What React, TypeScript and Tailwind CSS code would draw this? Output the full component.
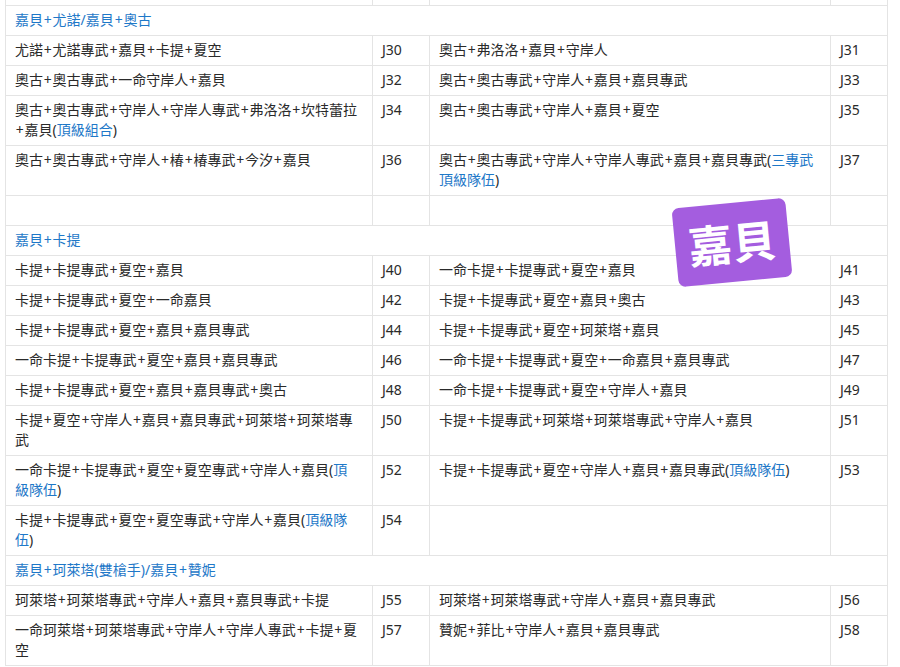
import React from "react";

const Blue = ({ children }: { children: React.ReactNode }) => (
  <span className="text-[#1e78c8]">{children}</span>
);

function T({ text }: { text: string }) {
  const parts = text.split("+");
  const out: React.ReactNode[] = [];
  parts.forEach((p, i) => {
    if (i > 0)
      out.push(
        <span key={"p" + i} className="px-[0.8px]">
          +
        </span>
      );
    if (p) out.push(<React.Fragment key={"t" + i}>{p}</React.Fragment>);
  });
  return <>{out}</>;
}

const td =
  "border border-[#e4e4e4] pt-[4px] pb-[5px] px-[9px] leading-[20px] align-top whitespace-nowrap text-[14px] text-[#2a2a2a]";

function Row({
  a,
  ac,
  b,
  bc,
}: {
  a: React.ReactNode;
  ac: string;
  b: React.ReactNode;
  bc: string;
}) {
  return (
    <tr>
      <td className={td}>{a}</td>
      <td className={td}>{ac}</td>
      <td className={td}>{b}</td>
      <td className={td}>{bc}</td>
    </tr>
  );
}

function Header({ text }: { text: string }) {
  return (
    <tr>
      <td colSpan={4} className={td}>
        <span className="text-[#1e78c8]">
          <T text={text} />
        </span>
      </td>
    </tr>
  );
}

export default function App() {
  return (
    <div
      className="relative min-h-screen bg-white pl-[5px] overflow-hidden"
      style={{ fontFamily: '"Noto Sans", "Noto Sans CJK TC", sans-serif' }}
    >
      <table className="border-collapse table-fixed w-[882px]">
        <colgroup>
          <col className="w-[367px]" />
          <col className="w-[57px]" />
          <col className="w-[401px]" />
          <col className="w-[57px]" />
        </colgroup>
        <tbody>
          <tr className="h-[5px]">
            <td className="border-x border-b border-[#e4e4e4] p-0 h-[5px]"></td>
            <td className="border-x border-b border-[#e4e4e4] p-0 h-[5px]"></td>
            <td className="border-x border-b border-[#e4e4e4] p-0 h-[5px]"></td>
            <td className="border-x border-b border-[#e4e4e4] p-0 h-[5px]"></td>
          </tr>
          <Header text="嘉貝+尤諾/嘉貝+奧古" />
          <Row
            a={<T text="尤諾+尤諾專武+嘉貝+卡提+夏空" />}
            ac="J30"
            b={<T text="奧古+弗洛洛+嘉貝+守岸人" />}
            bc="J31"
          />
          <Row
            a={<T text="奧古+奧古專武+一命守岸人+嘉貝" />}
            ac="J32"
            b={<T text="奧古+奧古專武+守岸人+嘉貝+嘉貝專武" />}
            bc="J33"
          />
          <Row
            a={
              <>
                <T text="奧古+奧古專武+守岸人+守岸人專武+弗洛洛+坎特蕾拉" />
                <br />
                <T text="+嘉貝" />(<Blue>頂級組合</Blue>)
              </>
            }
            ac="J34"
            b={<T text="奧古+奧古專武+守岸人+嘉貝+夏空" />}
            bc="J35"
          />
          <Row
            a={<T text="奧古+奧古專武+守岸人+椿+椿專武+今汐+嘉貝" />}
            ac="J36"
            b={
              <>
                <T text="奧古+奧古專武+守岸人+守岸人專武+嘉貝+嘉貝專武" />(
                <Blue>三專武</Blue>
                <br />
                <Blue>頂級隊伍</Blue>)
              </>
            }
            bc="J37"
          />
          <Row a={"\u00a0"} ac="" b="" bc="" />
          <Header text="嘉貝+卡提" />
          <Row
            a={<T text="卡提+卡提專武+夏空+嘉貝" />}
            ac="J40"
            b={<T text="一命卡提+卡提專武+夏空+嘉貝" />}
            bc="J41"
          />
          <Row
            a={<T text="卡提+卡提專武+夏空+一命嘉貝" />}
            ac="J42"
            b={<T text="卡提+卡提專武+夏空+嘉貝+奧古" />}
            bc="J43"
          />
          <Row
            a={<T text="卡提+卡提專武+夏空+嘉貝+嘉貝專武" />}
            ac="J44"
            b={<T text="卡提+卡提專武+夏空+珂萊塔+嘉貝" />}
            bc="J45"
          />
          <Row
            a={<T text="一命卡提+卡提專武+夏空+嘉貝+嘉貝專武" />}
            ac="J46"
            b={<T text="一命卡提+卡提專武+夏空+一命嘉貝+嘉貝專武" />}
            bc="J47"
          />
          <Row
            a={<T text="卡提+卡提專武+夏空+嘉貝+嘉貝專武+奧古" />}
            ac="J48"
            b={<T text="一命卡提+卡提專武+夏空+守岸人+嘉貝" />}
            bc="J49"
          />
          <Row
            a={
              <>
                <T text="卡提+夏空+守岸人+嘉貝+嘉貝專武+珂萊塔+珂萊塔專" />
                <br />武
              </>
            }
            ac="J50"
            b={<T text="卡提+卡提專武+珂萊塔+珂萊塔專武+守岸人+嘉貝" />}
            bc="J51"
          />
          <Row
            a={
              <>
                <T text="一命卡提+卡提專武+夏空+夏空專武+守岸人+嘉貝" />(
                <Blue>頂</Blue>
                <br />
                <Blue>級隊伍</Blue>)
              </>
            }
            ac="J52"
            b={
              <>
                <T text="卡提+卡提專武+夏空+守岸人+嘉貝+嘉貝專武" />(
                <Blue>頂級隊伍</Blue>)
              </>
            }
            bc="J53"
          />
          <Row
            a={
              <>
                <T text="卡提+卡提專武+夏空+夏空專武+守岸人+嘉貝" />(
                <Blue>頂級隊</Blue>
                <br />
                <Blue>伍</Blue>)
              </>
            }
            ac="J54"
            b=""
            bc=""
          />
          <Header text="嘉貝+珂萊塔(雙槍手)/嘉貝+贊妮" />
          <Row
            a={<T text="珂萊塔+珂萊塔專武+守岸人+嘉貝+嘉貝專武+卡提" />}
            ac="J55"
            b={<T text="珂萊塔+珂萊塔專武+守岸人+嘉貝+嘉貝專武" />}
            bc="J56"
          />
          <Row
            a={
              <>
                <T text="一命珂萊塔+珂萊塔專武+守岸人+守岸人專武+卡提+夏" />
                <br />空
              </>
            }
            ac="J57"
            b={<T text="贊妮+菲比+守岸人+嘉貝+嘉貝專武" />}
            bc="J58"
          />
        </tbody>
      </table>

      <div className="absolute left-[675px] top-[203px] w-[114px] h-[79px] rotate-[-5.5deg] rounded-[7px] bg-[#a45ddf] flex items-center justify-center">
        <span className="text-white font-bold text-[44px] leading-none">
          嘉貝
        </span>
      </div>
    </div>
  );
}
